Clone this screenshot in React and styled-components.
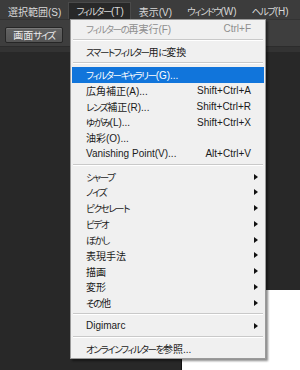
import React from "react";
import styled, { createGlobalStyle } from "styled-components";

const GlobalStyle = createGlobalStyle`
  html, body {
    margin: 0;
    padding: 0;
    background: #ffffff;
  }
  body {
    font-family: "Liberation Sans", "Noto Sans CJK JP", sans-serif;
    font-feature-settings: "palt";
  }
`;

const menuItems = [
  { label: "フィルターの再実行(F)", shortcut: "Ctrl+F", disabled: true },
  { sep: true },
  { label: "スマートフィルター用に変換" },
  { sep: true },
  { label: "フィルターギャラリー(G)...", active: true },
  { label: "広角補正(A)...", shortcut: "Shift+Ctrl+A" },
  { label: "レンズ補正(R)...", shortcut: "Shift+Ctrl+R" },
  { label: "ゆがみ(L)...", shortcut: "Shift+Ctrl+X" },
  { label: "油彩(O)..." },
  { label: "Vanishing Point(V)...", shortcut: "Alt+Ctrl+V" },
  { sep: true },
  { label: "シャープ", sub: true },
  { label: "ノイズ", sub: true },
  { label: "ピクセレート", sub: true },
  { label: "ビデオ", sub: true },
  { label: "ぼかし", sub: true },
  { label: "表現手法", sub: true },
  { label: "描画", sub: true },
  { label: "変形", sub: true },
  { label: "その他", sub: true },
  { sep: true },
  { label: "Digimarc", sub: true },
  { sep: true },
  { label: "オンラインフィルターを参照..." },
];

const topMenus = [
  { label: "選択範囲(S)" },
  { label: "フィルター(T)", open: true },
  { label: "表示(V)" },
  { label: "ウィンドウ(W)" },
  { label: "ヘルプ(H)" },
];

// kana in the UI font are set narrow, so squeeze the kana runs
function JpText({ text }) {
  return text
    .split(/([\u3040-\u30ff]+)/)
    .map((part, i) =>
      /[\u3040-\u30ff]/.test(part) ? <Kana key={i}>{part}</Kana> : part
    );
}

function App() {
  return (
    <>
      <GlobalStyle />
      <Screen>
        <MenuBar>
          {topMenus.map((m) => (
            <TopItem key={m.label} $open={m.open}>
              <JpText text={m.label} />
            </TopItem>
          ))}
        </MenuBar>
        <Toolbar>
          <ToolButton>
            <JpText text="画面サイズ" />
          </ToolButton>
        </Toolbar>
        <TabStrip />
        <Workspace>
          <LeftPane />
          <RightPane>
            <DarkFill />
          </RightPane>
        </Workspace>

        <DropMenu>
          {menuItems.map((item, i) =>
            item.sep ? (
              <Separator key={i} />
            ) : (
              <Row key={i} $active={item.active} $disabled={item.disabled}>
                <Label>
                  <JpText text={item.label} />
                </Label>
                {item.shortcut && <Shortcut>{item.shortcut}</Shortcut>}
                <ArrowCell>{item.sub && <Arrow />}</ArrowCell>
              </Row>
            )
          )}
        </DropMenu>
      </Screen>
    </>
  );
}

const Screen = styled.div`
  position: relative;
  width: 300px;
  height: 370px;
  display: flex;
  flex-direction: column;
  background: #ffffff;
  overflow: hidden;
`;

const Kana = styled.span`
  font-size: 0.95em;
  letter-spacing: -1.4px;
`;

const MenuBar = styled.div`
  height: 19px;
  display: flex;
  align-items: flex-end;
  background: #3c3c3c;
`;

const TopItem = styled.div`
  height: 17px;
  box-sizing: border-box;
  padding: 0 6px 0 7px;
  display: flex;
  align-items: center;
  font-size: 10px;
  color: #d8d8d8;
  white-space: nowrap;
  background: ${(p) => (p.$open ? "#282828" : "transparent")};
  border: 1px solid ${(p) => (p.$open ? "#4a4a4a" : "transparent")};
  border-bottom: none;
`;

const Toolbar = styled.div`
  height: 28px;
  box-sizing: border-box;
  display: flex;
  align-items: center;
  padding: 3px 5px 0;
  background: #3e3e3e;
  border-top: 1px solid #333333;
  border-bottom: 1px solid #2c2c2c;
`;

const ToolButton = styled.div`
  width: 58px;
  height: 16px;
  box-sizing: border-box;
  display: flex;
  align-items: center;
  justify-content: center;
  font-size: 10px;
  color: #ececec;
  background: linear-gradient(#626262, #555555);
  border: 1px solid #262626;
  box-shadow: inset 0 1px 0 #7a7a7a;
  border-radius: 2px;
`;

const TabStrip = styled.div`
  height: 5px;
  background: #333333;
`;

const Workspace = styled.div`
  flex: 1;
  display: flex;
`;

const LeftPane = styled.div`
  width: 181px;
  background: #282828;
  border-right: 1px solid #111111;
`;

const RightPane = styled.div`
  flex: 1;
  display: flex;
  flex-direction: column;
  background: #ffffff;
`;

const DarkFill = styled.div`
  height: 238px;
  background: #282828;
`;

const DropMenu = styled.div`
  position: absolute;
  top: 19px;
  left: 70px;
  width: 196px;
  box-sizing: border-box;
  padding: 1px;
  background: #f0f0f0;
  border: 1px solid #9a9a9a;
  box-shadow: 2px 2px 2px rgba(0, 0, 0, 0.45);
`;

const Row = styled.div`
  height: 15.75px;
  display: flex;
  align-items: center;
  padding-left: 14px;
  font-size: 10px;
  white-space: nowrap;
  color: ${(p) =>
    p.$active ? "#ffffff" : p.$disabled ? "#8e8e8e" : "#1b1b1b"};
  background: ${(p) => (p.$active ? "#1175db" : "transparent")};
`;

const Label = styled.span`
  flex: 1;
`;

const Shortcut = styled.span`
  font-family: "Liberation Sans", sans-serif;
`;

const ArrowCell = styled.span`
  width: 13px;
  height: 100%;
  display: flex;
  align-items: center;
  padding-left: 3px;
  box-sizing: border-box;
`;

const Arrow = styled.span`
  width: 0;
  height: 0;
  border-top: 3.5px solid transparent;
  border-bottom: 3.5px solid transparent;
  border-left: 4px solid #111111;
`;

const Separator = styled.div`
  height: 7.25px;
  display: flex;
  align-items: center;
  padding: 0 1px;

  &::before {
    content: "";
    flex: 1;
    height: 1px;
    background: #c9c9c9;
    border-bottom: 1px solid #ffffff;
  }
`;

export default App;
